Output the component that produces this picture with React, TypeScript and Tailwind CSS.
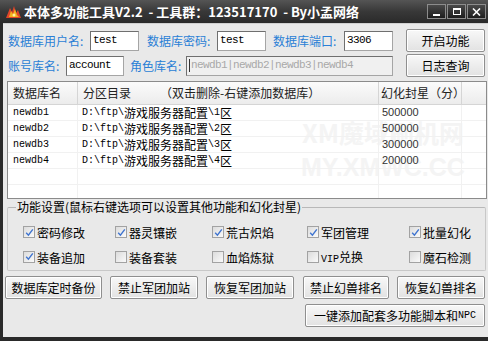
import React from 'react';

const UI = "font-['Noto_Sans_CJK_SC',sans-serif]";
const MONO = "font-['Liberation_Mono',monospace]";

function Mixed({ text, size = 'text-[12px]' }: { text: string; size?: string }) {
  const parts = text.match(/[\x00-\x7f]+|[^\x00-\x7f]+/g) ?? [];
  return (
    <>
      {parts.map((p, i) =>
        /^[\x00-\x7f]/.test(p) ? (
          <span key={i} className={`${MONO} text-[10px]`}>
            {p}
          </span>
        ) : (
          <span key={i} className={`${UI} ${size}`}>
            {p}
          </span>
        )
      )}
    </>
  );
}

function WinBtn({ children }: { children: React.ReactNode }) {
  return (
    <div className="w-[19px] h-[15px] border border-[#8c8c8c] bg-linear-to-b from-[#4a4a4a] to-[#1e1e1e] flex items-center justify-center">
      {children}
    </div>
  );
}

function TitleBar() {
  return (
    <div className="h-[23px] shrink-0 flex items-center bg-linear-to-b from-[#555] via-[#383838] to-[#2a2a2a]">
      <svg width="17" height="14" viewBox="0 0 17 14" className="ml-[5px]">
        <path d="M1 13 L5 3 L7 7 L9 1 L11 8 L13 5 L16 13 Z" fill="#e0442a" />
        <path d="M4 12 L6 6 L8 9 L10 4 L12 10 L14 12 Z" fill="#f6b21d" />
        <circle cx="9" cy="10" r="1.5" fill="#fff3a0" />
      </svg>
      <span className={`${UI} ml-[2px] text-white font-bold text-[13px] leading-none whitespace-pre`}>
        本体多功能工具V2.2  - 工具群：123517170  - By小孟网络
      </span>
      <div className="ml-auto mr-[2px] flex gap-[1px]">
        <WinBtn>
          <span className="w-[7px] h-[2px] bg-white mt-[6px]" />
        </WinBtn>
        <WinBtn>
          <span className="w-[8px] h-[7px] border border-white border-t-2" />
        </WinBtn>
        <WinBtn>
          <svg width="9" height="8" viewBox="0 0 9 8">
            <path d="M1 0.5 L8 7.5 M8 0.5 L1 7.5" stroke="#fff" strokeWidth="1.6" />
          </svg>
        </WinBtn>
      </div>
    </div>
  );
}

function Label({ w, children }: { w: string; children: React.ReactNode }) {
  return (
    <div className={`${w} ${UI} shrink-0 text-[12px] text-[#2a7fd6] leading-none`}>{children}</div>
  );
}

function Field({ w, value, disabled }: { w: string; value: string; disabled?: boolean }) {
  return (
    <div
      className={`${w} shrink-0 h-[20px] border border-[#a5a5a5] border-t-[#6f6f6f] border-l-[#6f6f6f] flex items-center pl-[2px] overflow-hidden ${
        disabled ? 'bg-[#f0f0f0] text-[#a8a8a8]' : 'bg-white text-black'
      }`}
    >
      {disabled && <span className="w-px h-[13px] bg-[#333] mr-[1px]" />}
      <span className={`${MONO} text-[11px] tracking-[-0.6px] leading-none whitespace-pre`}>{value}</span>
    </div>
  );
}

function Btn({ w, children }: { w: string; children: React.ReactNode }) {
  return (
    <div
      className={`${w} shrink-0 h-[23px] rounded-[2px] border border-[#8f8f8f] bg-linear-to-b from-[#f8f8f8] to-[#e2e2e2] shadow-[inset_0_0_0_1px_#ffffff] flex items-center justify-center text-[12px] text-black leading-none ${UI}`}
    >
      {children}
    </div>
  );
}

function Check({ checked, label }: { checked?: boolean; label: string }) {
  return (
    <div className="flex items-center gap-[2px]">
      <span className="w-[12px] h-[12px] shrink-0 border border-[#a2a2a2] bg-linear-to-br from-[#dcdcdc] to-[#fafafa] flex items-center justify-center">
        {checked && (
          <svg width="9" height="9" viewBox="0 0 9 9">
            <path d="M1.2 4.8 L3.4 7.2 L7.8 1.4" stroke="#3f74cf" strokeWidth="1.4" fill="none" />
          </svg>
        )}
      </span>
      <span className="leading-none text-black">
        <Mixed text={label} />
      </span>
    </div>
  );
}

const rows = [
  { db: 'newdb1', dir: 'D:\\ftp\\游戏服务器配置\\1区', star: '500000' },
  { db: 'newdb2', dir: 'D:\\ftp\\游戏服务器配置\\2区', star: '500000' },
  { db: 'newdb3', dir: 'D:\\ftp\\游戏服务器配置\\3区', star: '300000' },
  { db: 'newdb4', dir: 'D:\\ftp\\游戏服务器配置\\4区', star: '200000' },
  { db: '', dir: '', star: '' },
  { db: '', dir: '', star: '' },
];

function Table() {
  return (
    <div className="relative ml-[4px] mr-[1px] mt-[4px] h-[118px] border border-[#8b8b8b] bg-white overflow-hidden">
      <div className="absolute left-[290px] top-[38px] w-[170px] flex flex-col items-center pointer-events-none select-none text-[#f4f4f4] font-bold leading-none">
        <span className={`${UI} text-[25px]`}>XM魔域刷机网</span>
        <span className="font-['Liberation_Sans',sans-serif] text-[25px] mt-[10px]">MY.XMWC.CC</span>
      </div>
      <div className="relative flex h-[23px] bg-linear-to-b from-[#fbfbfb] to-[#ececec] border-b border-[#d5d5d5] text-[12px] text-[#222] leading-none">
        <div className={`${UI} w-[70px] border-r border-[#d5d5d5] flex items-center pl-[5px]`}>数据库名</div>
        <div className={`${UI} w-[301px] border-r border-[#d5d5d5] flex items-center pl-[5px]`}>
          分区目录<span className="ml-[29px]">（双击删除-右键添加数据库）</span>
        </div>
        <div className={`${UI} w-[83px] border-r border-[#d5d5d5] flex items-center pl-[2px]`}>幻化封星（分）</div>
        <div className="flex-1" />
      </div>
      {rows.map((r, i) => (
        <div key={i} className="relative flex h-[16px] border-b border-[#f1f1f1] text-black leading-none">
          <div className="w-[70px] border-r border-[#f1f1f1] flex items-center pl-[5px]">
            <span className={`${MONO} text-[10px]`}>{r.db}</span>
          </div>
          <div className="w-[301px] border-r border-[#f1f1f1] flex items-center pl-[4px] whitespace-pre">
            <Mixed text={r.dir} />
          </div>
          <div className="w-[83px] border-r border-[#f1f1f1] flex items-center pl-[3px]">
            <span className="font-['Liberation_Sans',sans-serif] text-[11px] text-[#333]">{r.star}</span>
          </div>
          <div className="flex-1" />
        </div>
      ))}
    </div>
  );
}

export default function App() {
  return (
    <div className="w-[488px] h-[341px] flex flex-col bg-[#2a2a2a] overflow-hidden">
      <TitleBar />
      <div className="flex-1 ml-[3px] mb-[4px] bg-[#e9e9e9] flex flex-col border-t border-[#d0d0d0]">
        <div className="flex items-center h-[23px] mt-[5px] pl-[5px]">
          <Label w="w-[82px]">数据库用户名:</Label>
          <Field w="w-[49px]" value="test" />
          <Label w="w-[70px] ml-[8px]">数据库密码:</Label>
          <Field w="w-[49px]" value="test" />
          <Label w="w-[71px] ml-[7px]">数据库端口:</Label>
          <Field w="w-[49px]" value="3306" />
          <div className="ml-[13px]">
            <Btn w="w-[79px]">开启功能</Btn>
          </div>
        </div>
        <div className="flex items-center h-[23px] mt-[2px] pl-[5px]">
          <Label w="w-[58px]">账号库名:</Label>
          <Field w="w-[58px]" value="account" />
          <Label w="w-[56px] ml-[6px]">角色库名:</Label>
          <Field w="w-[207px]" value="newdb1|newdb2|newdb3|newdb4" disabled />
          <div className="ml-[13px]">
            <Btn w="w-[79px]">日志查询</Btn>
          </div>
        </div>
        <Table />
        <fieldset className="ml-[4px] mr-[2px] mt-[2px] h-[70px] border border-[#c8c8c8] border-t-[#b8b8b8] rounded-[2px] px-0">
          <legend className={`${UI} ml-[8px] px-[1px] text-[12px] text-black leading-none`}>
            功能设置(鼠标右键选项可以设置其他功能和幻化封星)
          </legend>
          <div className="grid grid-cols-[92px_97px_95px_102px_1fr] gap-y-[8px] pl-[15px] pt-[11px]">
            <Check checked label="密码修改" />
            <Check checked label="器灵镶嵌" />
            <Check checked label="荒古炽焰" />
            <Check checked label="军团管理" />
            <Check checked label="批量幻化" />
            <Check checked label="装备追加" />
            <Check label="装备套装" />
            <Check label="血焰炼狱" />
            <Check label="VIP兑换" />
            <Check label="魔石检测" />
          </div>
        </fieldset>
        <div className="flex mt-[5px] pl-[2px] gap-[8px]">
          <Btn w="w-[97px]">数据库定时备份</Btn>
          <Btn w="w-[88px]">禁止军团加站</Btn>
          <Btn w="w-[88px]">恢复军团加站</Btn>
          <Btn w="w-[86px] ml-[1px]">禁止幻兽排名</Btn>
          <Btn w="w-[88px]">恢复幻兽排名</Btn>
        </div>
        <div className="flex justify-end mt-[5px] pr-[3px]">
          <Btn w="w-[180px]">
            <Mixed text="一键添加配套多功能脚本和NPC" />
          </Btn>
        </div>
      </div>
    </div>
  );
}
